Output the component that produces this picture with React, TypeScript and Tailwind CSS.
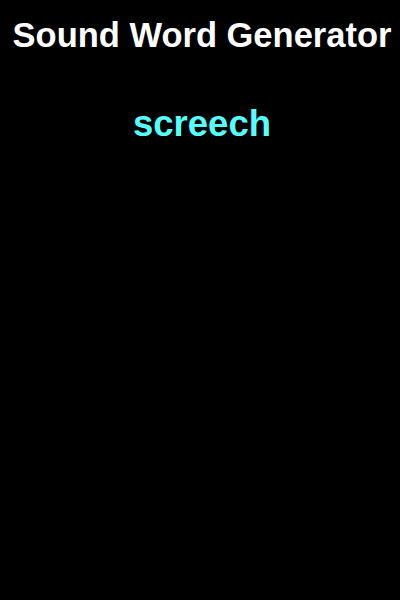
export default function App() {
  return (
    <div className="w-[400px] h-[600px] bg-black flex flex-col items-center pl-[4px] font-['Liberation_Sans',Arial,sans-serif]">
      <h1 className="mt-[15px] text-[34.5px] leading-[40px] font-bold text-white whitespace-nowrap">Sound Word Generator</h1>
      <p className="mt-[48px] text-[36.5px] leading-[42px] font-bold text-[#55ffff]">screech</p>
    </div>
  );
}
